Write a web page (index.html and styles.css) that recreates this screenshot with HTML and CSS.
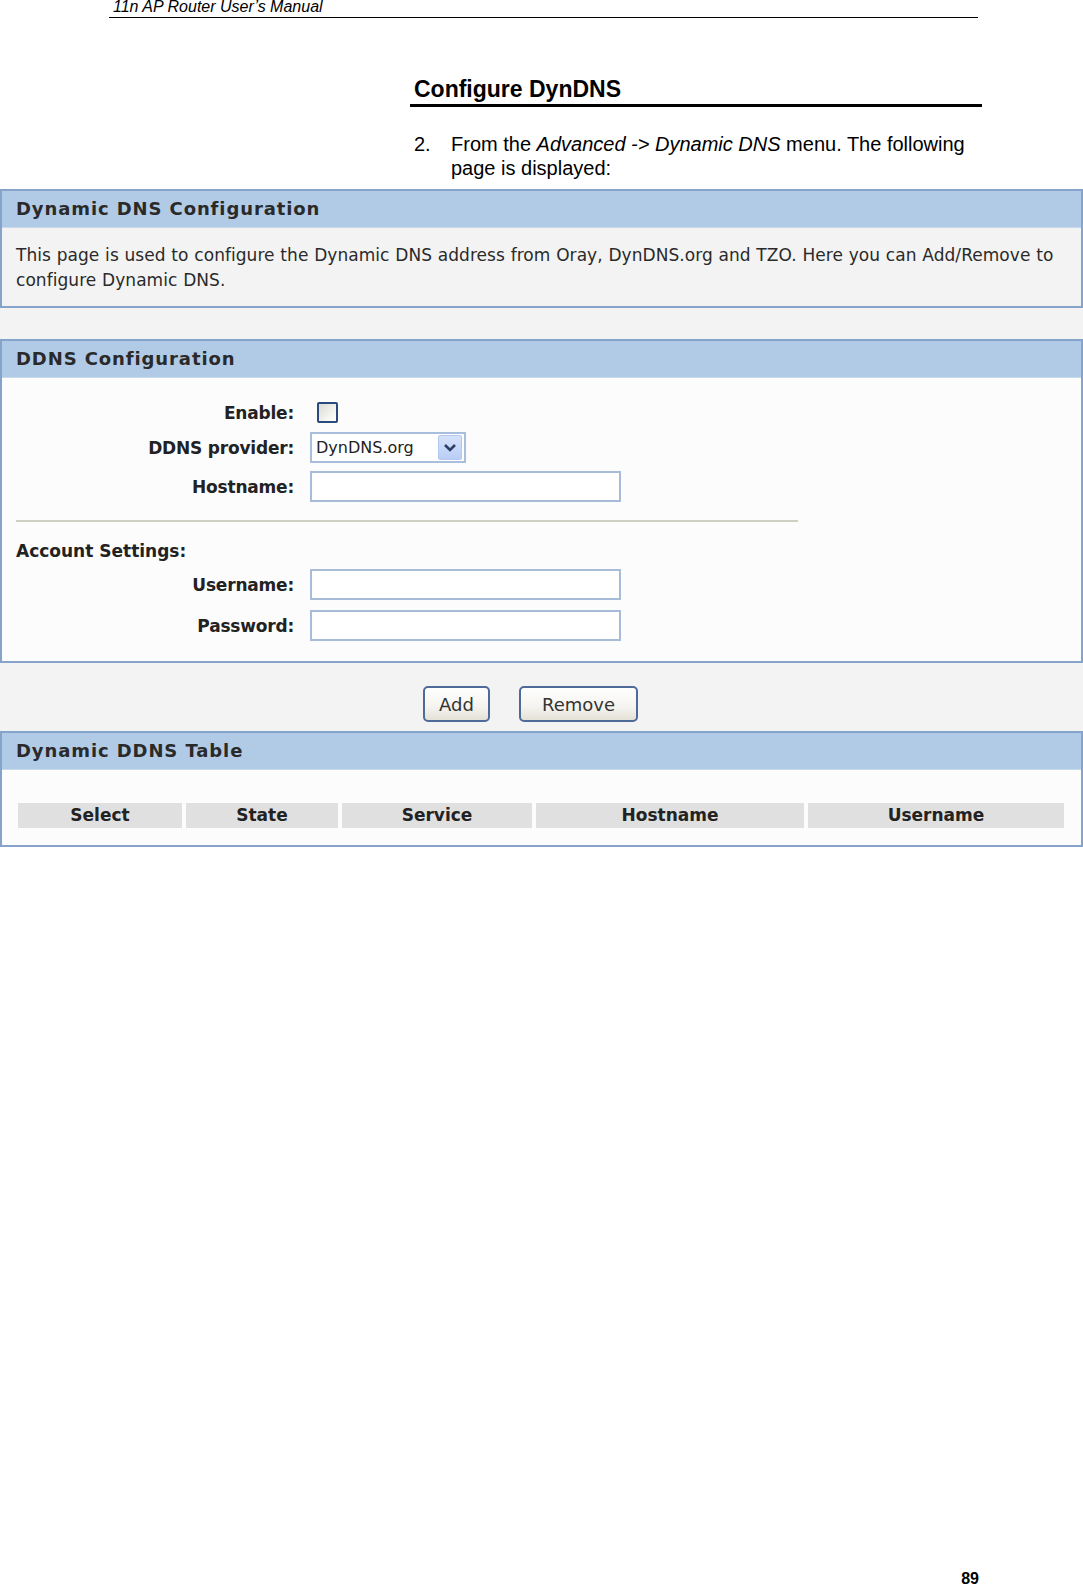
FILE: index.html
```html
<!DOCTYPE html>
<html>
<head>
<meta charset="utf-8">
<link rel="stylesheet" href="styles.css">
</head>
<body>
<div class="page">
  <div class="doc-header"><span class="doc-header-text">11n AP Router User’s Manual</span></div>

  <div class="doc-section">
    <h2 class="doc-title">Configure DynDNS</h2>
    <div class="step">
      <span class="step-num">2.</span>
      <span class="step-text">From the <i>Advanced -&gt; Dynamic DNS</i> menu. The following page is displayed:</span>
    </div>
  </div>

  <div class="shot">
    <div class="panel panel-info">
      <div class="panel-head">Dynamic DNS Configuration</div>
      <div class="panel-body info-body">This page is used to configure the Dynamic DNS address from Oray, DynDNS.org and TZO. Here you can Add/Remove to configure Dynamic DNS.</div>
    </div>

    <div class="panel panel-form">
      <div class="panel-head">DDNS Configuration</div>
      <div class="panel-body form-body">
        <div class="row row-enable">
          <span class="label">Enable:</span>
          <span class="checkbox"></span>
        </div>
        <div class="row row-provider">
          <span class="label">DDNS provider:</span>
          <span class="select"><span class="select-text">DynDNS.org</span><span class="select-btn"><svg width="14" height="10" viewBox="0 0 14 10"><path d="M2 2 L7 7 L12 2" fill="none" stroke="#2c3f66" stroke-width="2.6"/></svg></span></span>
        </div>
        <div class="row row-host">
          <span class="label">Hostname:</span>
          <span class="input"></span>
        </div>
        <div class="divider"></div>
        <div class="account">Account Settings:</div>
        <div class="row row-user">
          <span class="label">Username:</span>
          <span class="input"></span>
        </div>
        <div class="row row-pass">
          <span class="label">Password:</span>
          <span class="input"></span>
        </div>
      </div>
    </div>

    <div class="buttons">
      <span class="btn btn-add">Add</span>
      <span class="btn btn-remove">Remove</span>
    </div>

    <div class="panel panel-table">
      <div class="panel-head">Dynamic DDNS Table</div>
      <div class="panel-body table-body">
        <div class="thead">
          <span class="th th-select">Select</span>
          <span class="th th-state">State</span>
          <span class="th th-service">Service</span>
          <span class="th th-host">Hostname</span>
          <span class="th th-user">Username</span>
        </div>
      </div>
    </div>
  </div>

  <div class="doc-footer"><span class="page-num">89</span></div>
</div>
</body>
</html>
```

FILE: styles.css
```css
html, body {
  margin: 0;
  padding: 0;
  background: #ffffff;
}

.page {
  width: 1083px;
  height: 1586px;
  display: flex;
  flex-direction: column;
  font-family: "Liberation Sans", Arial, sans-serif;
  color: #000;
}

.doc-header {
  margin-left: 109px;
  width: 869px;
  height: 18px;
  border-bottom: 1px solid #000;
  box-sizing: border-box;
}

.doc-header-text {
  display: block;
  padding-left: 4px;
  font-size: 16px;
  font-style: italic;
  line-height: 16px;
  margin-top: -1px;
}

.doc-section {
  margin-left: 410px;
  width: 572px;
}

.doc-title {
  margin: 59px 0 0 0;
  padding: 0 0 0 4px;
  font-size: 23px;
  font-weight: bold;
  letter-spacing: 0;
  line-height: 24px;
  height: 27px;
  border-bottom: 3px solid #000;
}

.step {
  display: flex;
  margin-top: 25px;
  font-size: 20px;
  line-height: 24px;
}

.step-num {
  width: 37px;
  padding-left: 4px;
  flex: none;
}

.step-text {
  width: 524px;
}

.shot {
  margin-top: 9px;
  background: #f3f3f3;
  font-family: "DejaVu Sans", Verdana, sans-serif;
  color: #222;
}

.panel {
  border: 2px solid #86a4cb;
}

.panel-head {
  background: #b1cbe6;
  height: 36px;
  line-height: 36px;
  padding-left: 14px;
  font-size: 18px;
  font-weight: bold;
  letter-spacing: 0.9px;
  color: #2a2a2a;
}

.panel-body {
  border-top: 1px solid #c9d9ec;
}

.info-body {
  background: #f3f3f3;
  padding: 15px 14px 14px 14px;
  font-size: 17px;
  line-height: 25px;
  letter-spacing: 0.05px;
  word-spacing: 0.3px;
  height: 49px;
  color: #2a2a2a;
}

.panel-form {
  margin-top: 31px;
}

.form-body {
  background: #fcfcfc;
  height: 284px;
  padding-left: 14px;
  padding-top: 19px;
  box-sizing: border-box;
}

.row {
  display: flex;
  align-items: center;
  height: 31px;
}

.label {
  width: 278px;
  text-align: right;
  font-weight: bold;
  font-size: 17px;
  letter-spacing: -0.2px;
  margin-right: 16px;
  color: #222;
}

.row-provider { margin-top: 4px; }
.row-host { margin-top: 8px; }

.checkbox {
  width: 17px;
  height: 17px;
  margin-left: 7px;
  border: 2px solid #2b4a7e;
  border-radius: 2px;
  background: linear-gradient(135deg, #dcdcd6 0%, #f6f6f2 70%, #ffffff 100%);
}

.select {
  display: flex;
  align-items: center;
  justify-content: space-between;
  box-sizing: border-box;
  width: 156px;
  height: 31px;
  border: 2px solid #a9bedc;
  background: #fff;
  padding: 0 2px 0 4px;
}

.select-text {
  font-size: 16px;
  color: #222;
}

.select-btn {
  width: 24px;
  height: 25px;
  border-radius: 2px;
  background: linear-gradient(180deg, #d6e2fb 0%, #b9cdf5 100%);
  border: 1px solid #b4c7ee;
  box-sizing: border-box;
  display: flex;
  align-items: center;
  justify-content: center;
}

.input {
  box-sizing: border-box;
  width: 311px;
  height: 31px;
  border: 2px solid #a7bcd8;
  background: #fff;
}

.divider {
  margin-top: 18px;
  width: 782px;
  height: 2px;
  background: #cfcfc4;
}

.account {
  margin-top: 18px;
  font-weight: bold;
  font-size: 17px;
  line-height: 22px;
}

.row-user { margin-top: 7px; }
.row-pass { margin-top: 10px; }

.buttons {
  height: 68px;
  box-sizing: border-box;
  padding-top: 23px;
  padding-right: 22px;
  display: flex;
  align-items: flex-start;
  justify-content: center;
  gap: 29px;
}

.btn {
  box-sizing: border-box;
  height: 36px;
  border: 2px solid #4d6a9a;
  border-radius: 5px;
  background: linear-gradient(180deg, #ffffff 0%, #f4f3ee 60%, #e3e1d6 100%);
  display: flex;
  align-items: center;
  justify-content: center;
  font-size: 18px;
  color: #333;
}

.btn-add { width: 67px; }
.btn-remove { width: 119px; }

.table-body {
  background: #fcfcfc;
  padding: 33px 17px 17px 16px;
}

.thead {
  display: flex;
  gap: 4px;
}

.th {
  background: #e0e0e0;
  height: 25px;
  line-height: 25px;
  text-align: center;
  font-weight: bold;
  font-size: 17px;
  color: #222;
}

.th-select { width: 164px; }
.th-state { width: 152px; }
.th-service { width: 190px; }
.th-host { width: 268px; }
.th-user { width: 256px; }

.doc-footer {
  margin-top: auto;
  height: 18px;
  width: 979px;
  text-align: right;
}

.page-num {
  display: block;
  font-weight: bold;
  font-size: 16px;
  line-height: 22px;
}
```
